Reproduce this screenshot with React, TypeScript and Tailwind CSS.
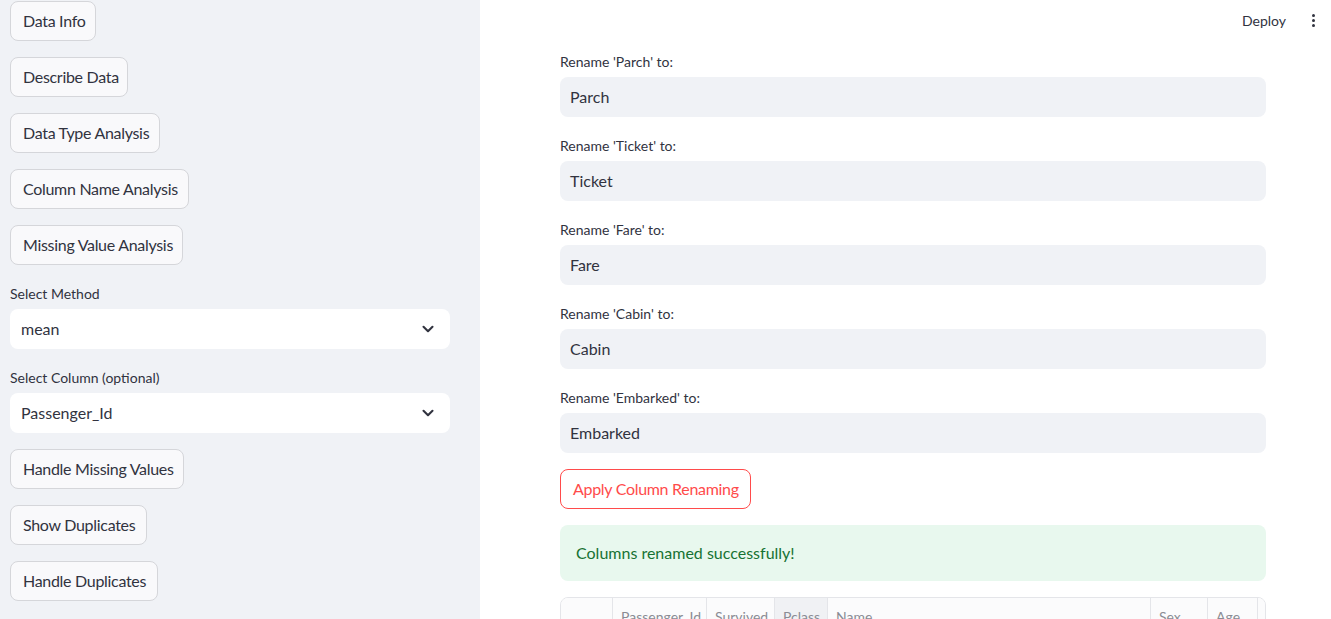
import { ChevronDown } from "lucide-react";

const sideButtons1 = [
  { label: "Data Info", w: "w-[86px]" },
  { label: "Describe Data", w: "w-[118px]" },
  { label: "Data Type Analysis", w: "w-[150px]" },
  { label: "Column Name Analysis", w: "w-[179px]" },
  { label: "Missing Value Analysis", w: "w-[173px]" },
];

const sideButtons2 = [
  { label: "Handle Missing Values", w: "w-[174px]" },
  { label: "Show Duplicates", w: "w-[137px]" },
  { label: "Handle Duplicates", w: "w-[148px]" },
];

const renames = ["Parch", "Ticket", "Fare", "Cabin", "Embarked"];

// header cells of the data frame preview
const columns = [
  { name: "", w: "w-[51px]", active: false },
  { name: "Passenger_Id", w: "w-[94px]", active: false },
  { name: "Survived", w: "w-[68px]", active: false },
  { name: "Pclass", w: "w-[53px]", active: true },
  { name: "Name", w: "w-[323px]", active: false },
  { name: "Sex", w: "w-[57px]", active: false },
  { name: "Age", w: "w-[50px]", active: false },
  { name: "SibSp", w: "w-[60px]", active: false },
];

function SideButton({ label, w }: { label: string; w: string }) {
  return (
    <button
      className={`${w} h-[40px] mb-4 rounded-lg border border-[#d5d6da] bg-[#f9f9fb] px-3 text-left text-[16px] tracking-[-0.3px] text-[#31333f] whitespace-nowrap`}
    >
      {label}
    </button>
  );
}

function SelectBox({ label, value }: { label: string; value: string }) {
  return (
    <div className="mb-4">
      <div className="h-[24px] flex items-center text-[14px] text-[#31333f]">
        {label}
      </div>
      <div className="mt-1 h-[40px] w-[440px] rounded-lg bg-white flex items-center justify-between pl-[11px] pr-[13px] text-[16px] text-[#31333f]">
        <span>{value}</span>
        <ChevronDown size={18} strokeWidth={2.8} className="text-[#31333f]" />
      </div>
    </div>
  );
}

export default function App() {
  return (
    <div
      className="flex h-[619px] w-full overflow-hidden bg-white"
      style={{ fontFamily: "Lato, 'Open Sans', sans-serif" }}
    >
      <aside className="w-[480px] shrink-0 bg-[#f0f2f6] pl-[10px] pt-[1px]">
        <div className="flex flex-col items-start">
          {sideButtons1.map((b) => (
            <SideButton key={b.label} {...b} />
          ))}
        </div>
        <SelectBox label="Select Method" value="mean" />
        <SelectBox label="Select Column (optional)" value="Passenger_Id" />
        <div className="flex flex-col items-start">
          {sideButtons2.map((b) => (
            <SideButton key={b.label} {...b} />
          ))}
        </div>
      </aside>

      <main className="flex-1 flex flex-col min-h-0">
        <header className="h-[40px] shrink-0 flex items-center justify-end pr-[15px]">
          <span className="text-[14px] text-[#31333f] mr-[24px]">Deploy</span>
          <div className="flex flex-col items-center gap-[2px] w-[6px]">
            <span className="block h-[3px] w-[3px] rounded-full bg-[#31333f]" />
            <span className="block h-[3px] w-[3px] rounded-full bg-[#31333f]" />
            <span className="block h-[3px] w-[3px] rounded-full bg-[#31333f]" />
          </div>
        </header>

        <div className="shrink-0 pl-[80px] pt-[9px] w-[786px]">
          {renames.map((name) => (
            <div key={name} className="mb-4">
              <div className="h-[24px] flex items-center text-[14px] text-[#31333f]">
                Rename '{name}' to:
              </div>
              <div className="mt-1 h-[40px] w-[706px] rounded-lg bg-[#f0f2f6] flex items-center pl-[10px] text-[16px] text-[#31333f]">
                {name}
              </div>
            </div>
          ))}

          <button className="block h-[40px] w-[191px] mb-4 rounded-lg border border-[#ff4b4b] px-3 text-left text-[16px] tracking-[-0.3px] text-[#ff4b4b] whitespace-nowrap">
            Apply Column Renaming
          </button>

          <div className="h-[56px] w-[706px] mb-4 rounded-lg bg-[#e8f8ee] flex items-center pl-4 text-[16px] text-[#177233]">
            Columns renamed successfully!
          </div>

          <div className="w-[706px] h-[40px] rounded-lg border border-[#e4e5e9] overflow-hidden">
            <div className="flex h-[36px]">
              {columns.map((c, i) => (
                <div
                  key={i}
                  className={`${c.w} shrink-0 h-full flex items-center px-2 text-[14px] text-[#8a8c94] whitespace-nowrap ${
                    i > 0 ? "border-l border-[#e4e5e9]" : ""
                  } ${c.active ? "bg-[#f0f1f4]" : "bg-[#fbfbfc]"}`}
                >
                  {c.name}
                </div>
              ))}
            </div>
          </div>
        </div>
      </main>
    </div>
  );
}
